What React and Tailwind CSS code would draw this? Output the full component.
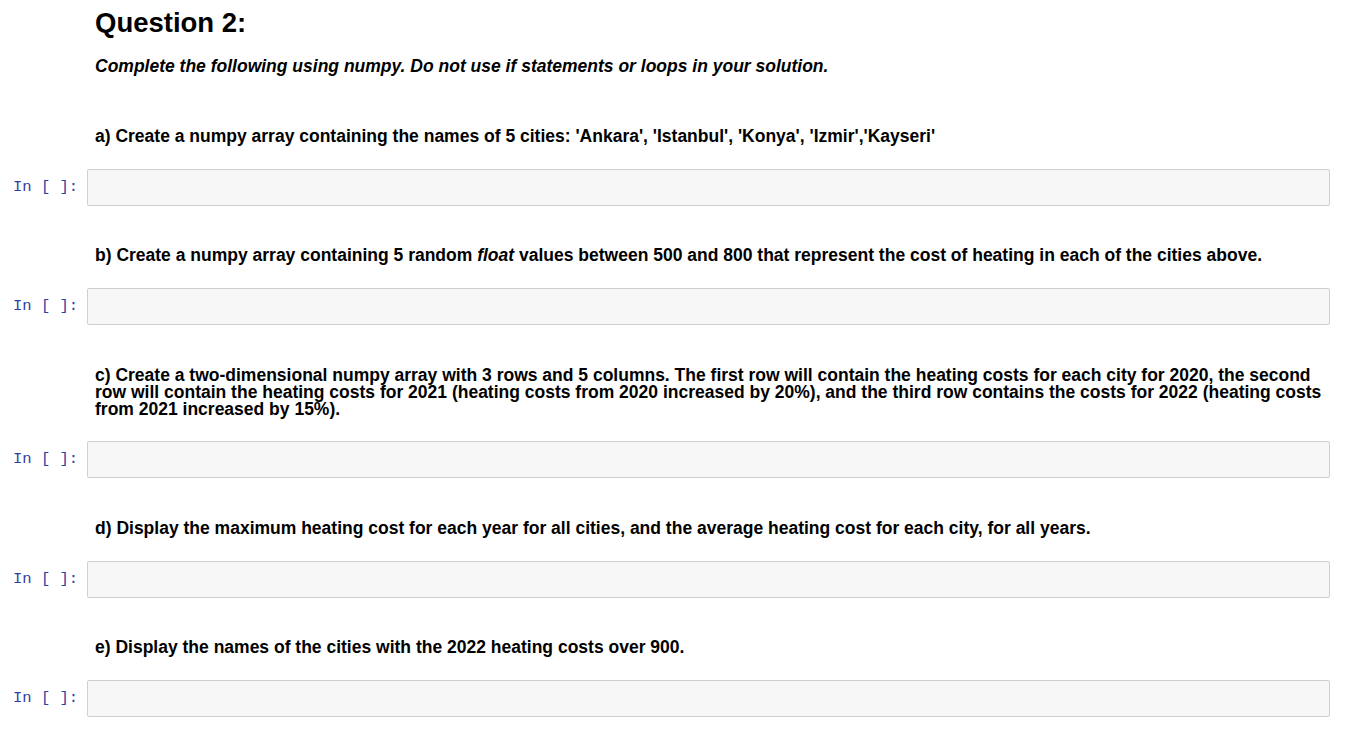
const parts = [
  {
    text: (
      <>a) Create a numpy array containing the names of 5 cities: 'Ankara', 'Istanbul', 'Konya', 'Izmir','Kayseri'</>
    ),
    top: "pt-[52px]",
    gap: "mt-[24px]",
  },
  {
    text: (
      <>b) Create a numpy array containing 5 random <i>float</i> values between 500 and 800 that represent the cost of heating in each of the cities above.</>
    ),
    top: "pt-[41px]",
    gap: "mt-[24px]",
  },
  {
    text: (
      <>c) Create a two-dimensional numpy array with 3 rows and 5 columns. The first row will contain the heating costs for each city for 2020, the second row will contain the heating costs for 2021 (heating costs from 2020 increased by 20%), and the third row contains the costs for 2022 (heating costs from 2021 increased by 15%).</>
    ),
    top: "pt-[42px]",
    gap: "mt-[23px]",
  },
  {
    text: (
      <>d) Display the maximum heating cost for each year for all cities, and the average heating cost for each city, for all years.</>
    ),
    top: "pt-[42px]",
    gap: "mt-[24px]",
  },
  {
    text: <>e) Display the names of the cities with the 2022 heating costs over 900.</>,
    top: "pt-[41px]",
    gap: "mt-[24px]",
  },
];

function CodeCell({ gap }) {
  return (
    <div className={"flex items-center " + gap}>
      <div
        className="w-[87px] pl-[13px] pt-[1px] text-[15.5px] text-[#303F9F]"
        style={{ fontFamily: '"Liberation Mono", monospace' }}
      >
        In&nbsp;[&nbsp;]:
      </div>
      <div className="flex-1 h-[37px] mr-[19px] bg-[#f7f7f7] border border-[#cfcfcf] rounded-[2px]" />
    </div>
  );
}

export default function App() {
  return (
    <div
      className="min-h-screen bg-white text-black"
      style={{ fontFamily: '"Liberation Sans", Arial, sans-serif' }}
    >
      <div className="pl-[95px] pr-[19px] pt-[8px]">
        <h2 className="text-[27.5px] font-bold leading-[30px]">Question 2:</h2>
        <p className="mt-[19px] text-[17.5px] font-bold italic leading-[18px]">
          Complete the following using numpy. Do not use if statements or loops in your solution.
        </p>
      </div>
      {parts.map((p, i) => (
        <div key={i} className={i === 0 ? "pt-[53px]" : p.top}>
          <div className="pl-[95px] pr-[19px] text-[17.5px] font-bold leading-[17px]">{p.text}</div>
          <CodeCell gap={p.gap} />
        </div>
      ))}
    </div>
  );
}
